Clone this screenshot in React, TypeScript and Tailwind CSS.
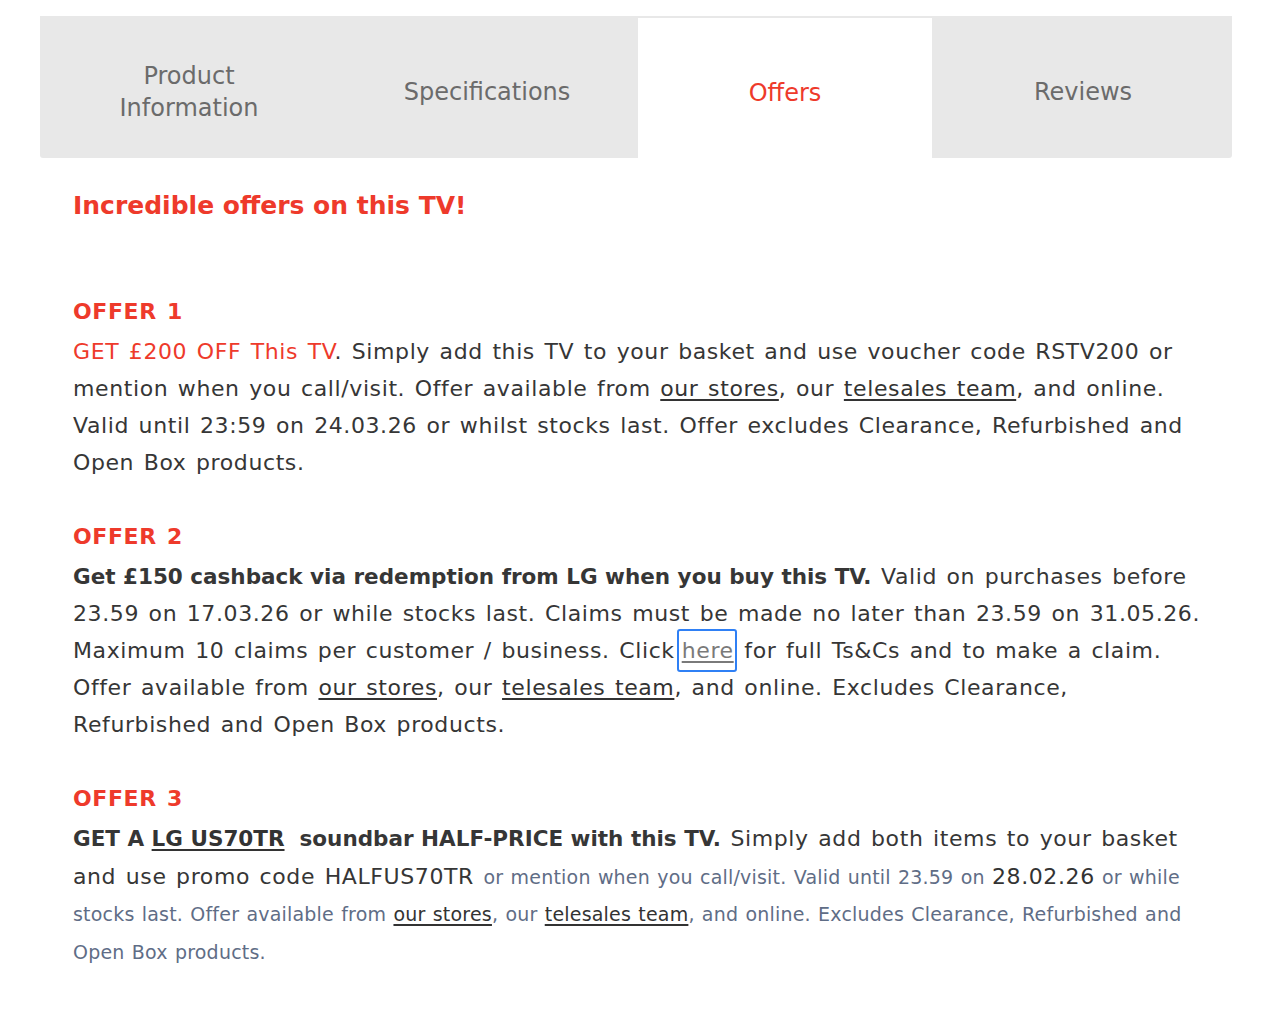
import type { ReactNode } from 'react';

const tabs = ['Product Information', 'Specifications', 'Offers', 'Reviews'];

function Link({ children }: { children: ReactNode }) {
  return <a className="underline underline-offset-[3px] decoration-[1.5px] text-[#333]">{children}</a>;
}

function Offer({ title, children }: { title: string; children: ReactNode }) {
  return (
    <div className="mb-[35px]">
      <div className="text-[22px] leading-[42px] font-bold text-[#ee3a2b]">{title}</div>
      {children}
    </div>
  );
}

export default function App() {
  return (
    <div className="min-h-screen bg-white pt-4 font-['DejaVu_Sans',sans-serif]">
      <div className="mx-[40px] w-[1192px]">
        {/* Tabs */}
        <div className="grid grid-cols-4 bg-[#e8e8e8] h-[142px] rounded-b-[3px]">
          {tabs.map(t => {
            const active = t === 'Offers';
            return (
              <div
                key={t}
                className={`flex items-center justify-center text-center px-16 pt-[10px] text-[24px] leading-[32px] ${
                  active ? 'bg-white text-[#ee3a2b] mt-[2px] mx-[2px]' : 'text-[#6b6b6b]'
                }`}
              >
                {t}
              </div>
            );
          })}
        </div>

        <div className="pl-[33px] pr-[30px] text-[#363636] text-[22px] tracking-[0.6px] [word-spacing:2px]">
          <h2 className="mt-[28px] mb-[65px] text-[25px] leading-[40px] font-bold text-[#ee3a2b] tracking-normal [word-spacing:normal]">
            Incredible offers on this TV!
          </h2>

          <Offer title="OFFER 1">
            <p className="leading-[37px]">
              <span className="text-[#ee3a2b]">GET £200 OFF This TV</span>. Simply add this TV to your basket and use
              voucher code RSTV200 or mention when you call/visit. Offer available from <Link>our stores</Link>, our{' '}
              <Link>telesales team</Link>, and online. Valid until 23:59 on 24.03.26 or whilst stocks last. Offer
              excludes Clearance, Refurbished and Open Box products.
            </p>
          </Offer>

          <Offer title="OFFER 2">
            <p className="leading-[37px]">
              <span className="font-bold text-[21.5px] tracking-normal [word-spacing:normal]">
                Get £150 cashback via redemption from LG when you buy this TV.
              </span>{' '}
              Valid on purchases before 23.59 on 17.03.26 or while stocks last. Claims must be made no later than 23.59
              on 31.05.26. Maximum 10 claims per customer / business. Click
              <a className="underline underline-offset-[3px] decoration-[1.5px] text-[#7a7a7a] outline-[2.5px] outline outline-[#2f80f5] rounded-[1px] pl-[3px] pr-[1px] py-[7px] ml-[4px]">
                here
              </a>{' '}
              for full Ts&amp;Cs and to make a claim. Offer available from <Link>our stores</Link>, our{' '}
              <Link>telesales team</Link>, and online. Excludes Clearance, Refurbished and Open Box products.
            </p>
          </Offer>

          <Offer title="OFFER 3">
            <p className="leading-[37.5px]">
              <span className="font-bold text-[21.5px] leading-[20px] tracking-normal [word-spacing:normal]">
                GET A <Link>LG US70TR</Link>&nbsp; soundbar HALF-PRICE with this TV.
              </span>{' '}
              Simply add both items to your basket and use promo code HALFUS70TR{' '}
              <span className="text-[19px] leading-[20px] text-[#5f6d86] tracking-[0.2px] [word-spacing:1px]">
                or mention when you call/visit. Valid until 23.59 on{' '}
                <span className="text-[22px] text-[#333] tracking-[0.6px]">28.02.26</span> or while stocks last. Offer
                available from <Link>our stores</Link>, our <Link>telesales team</Link>, and online. Excludes Clearance,
                Refurbished and Open Box products.
              </span>
            </p>
          </Offer>
        </div>
      </div>
    </div>
  );
}
